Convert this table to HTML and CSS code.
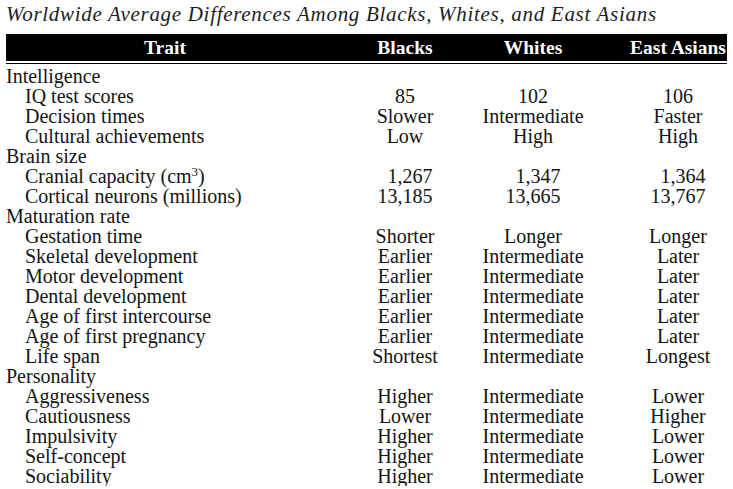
FILE: index.html
```html
<!DOCTYPE html>
<html>
<head>
<meta charset="utf-8">
<link rel="stylesheet" href="styles.css">
</head>
<body>
<div class="page">
  <div class="title">Worldwide Average Differences Among Blacks, Whites, and East Asians</div>
  <div class="thead">
    <div class="c trait">Trait</div>
    <div class="c">Blacks</div>
    <div class="c">Whites</div>
    <div class="c">East Asians</div>
  </div>
  <div class="rule"></div>
  <div class="tbody">
    <div class="grp">Intelligence</div><div></div><div></div><div></div>
    <div class="sub">IQ test scores</div><div class="c">85</div><div class="c">102</div><div class="c">106</div>
    <div class="sub">Decision times</div><div class="c">Slower</div><div class="c">Intermediate</div><div class="c">Faster</div>
    <div class="sub">Cultural achievements</div><div class="c">Low</div><div class="c">High</div><div class="c">High</div>

    <div class="grp">Brain size</div><div></div><div></div><div></div>
    <div class="sub">Cranial capacity (cm<sup>3</sup>)</div><div class="c"><span class="ghost">1</span>1,267</div><div class="c"><span class="ghost">1</span>1,347</div><div class="c"><span class="ghost">1</span>1,364</div>
    <div class="sub">Cortical neurons (millions)</div><div class="c">13,185</div><div class="c">13,665</div><div class="c">13,767</div>

    <div class="grp">Maturation rate</div><div></div><div></div><div></div>
    <div class="sub">Gestation time</div><div class="c">Shorter</div><div class="c">Longer</div><div class="c">Longer</div>
    <div class="sub">Skeletal development</div><div class="c">Earlier</div><div class="c">Intermediate</div><div class="c">Later</div>
    <div class="sub">Motor development</div><div class="c">Earlier</div><div class="c">Intermediate</div><div class="c">Later</div>
    <div class="sub">Dental development</div><div class="c">Earlier</div><div class="c">Intermediate</div><div class="c">Later</div>
    <div class="sub">Age of first intercourse</div><div class="c">Earlier</div><div class="c">Intermediate</div><div class="c">Later</div>
    <div class="sub">Age of first pregnancy</div><div class="c">Earlier</div><div class="c">Intermediate</div><div class="c">Later</div>
    <div class="sub">Life span</div><div class="c">Shortest</div><div class="c">Intermediate</div><div class="c">Longest</div>

    <div class="grp">Personality</div><div></div><div></div><div></div>
    <div class="sub">Aggressiveness</div><div class="c">Higher</div><div class="c">Intermediate</div><div class="c">Lower</div>
    <div class="sub">Cautiousness</div><div class="c">Lower</div><div class="c">Intermediate</div><div class="c">Higher</div>
    <div class="sub">Impulsivity</div><div class="c">Higher</div><div class="c">Intermediate</div><div class="c">Lower</div>
    <div class="sub">Self-concept</div><div class="c">Higher</div><div class="c">Intermediate</div><div class="c">Lower</div>
    <div class="sub">Sociability</div><div class="c">Higher</div><div class="c">Intermediate</div><div class="c">Lower</div>
  </div>
</div>
</body>
</html>
```

FILE: styles.css
```css
html, body {
  margin: 0;
  padding: 0;
  background: #ffffff;
}
body {
  font-family: "Liberation Serif", "Times New Roman", serif;
  color: #141414;
}
.page {
  padding: 0 6px 0 6px;
  width: 721px;
}
.title {
  font-style: italic;
  font-size: 21px;
  letter-spacing: 0.7px;
  line-height: 26px;
  padding-top: 1px;
  color: #1e1e1e;
  white-space: nowrap;
  margin-bottom: 7px;
}
.thead, .tbody {
  display: grid;
  grid-template-columns: 367px 64px 192px 98px;
}
.thead {
  background: #000;
  color: #fff;
  font-weight: bold;
  font-size: 19.5px;
  height: 27px;
  line-height: 27px;
}
.thead .trait {
  padding-right: 49px;
}
.rule {
  height: 1px;
  background: #000;
  margin-top: 2px;
  margin-bottom: 2px;
}
.tbody {
  font-size: 20px;
  line-height: 20px;
}
.c {
  display: flex;
  justify-content: center;
  white-space: nowrap;
}
.grp {
  white-space: nowrap;
}
.sub {
  padding-left: 19px;
  white-space: nowrap;
}
.ghost {
  visibility: hidden;
}
sup {
  font-size: 13px;
  line-height: 0;
  vertical-align: 7px;
}
```
